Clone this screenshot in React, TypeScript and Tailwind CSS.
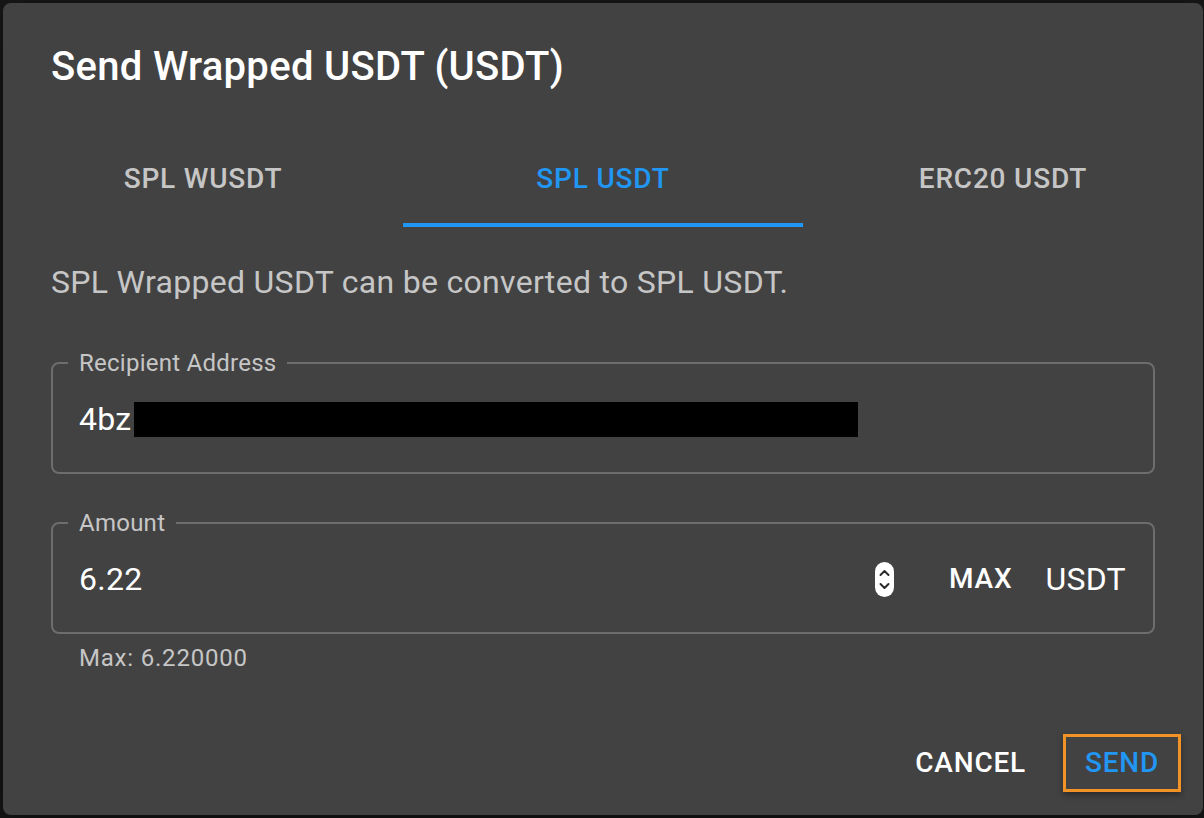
import { useState } from "react";

const tabs = ["SPL WUSDT", "SPL USDT", "ERC20 USDT"];

const Spinner = () => (
   <svg width="19" height="35" viewBox="0 0 19 35" className="shrink-0">
      <rect x="0" y="0" width="19" height="35" rx="9.5" fill="#ffffff" />
      <path d="M5.5 13 L9.5 9 L13.5 13" fill="none" stroke="#2a2a2a" strokeWidth="2" strokeLinecap="round" strokeLinejoin="round" />
      <path d="M5.5 22 L9.5 26 L13.5 22" fill="none" stroke="#2a2a2a" strokeWidth="2" strokeLinecap="round" strokeLinejoin="round" />
   </svg>
);

const Field = ({ label, children, className = "" }: { label: string; children: React.ReactNode; className?: string }) => (
   <fieldset className={`border-2 border-[#6d6d6d] rounded-[8px] px-[15px] ${className}`}>
      <legend className="px-[11px] text-[24px] leading-[24px] tracking-[0.25px] text-[#c6c6c6]">{label}</legend>
      {children}
   </fieldset>
);

export default function App() {
   const [active, setActive] = useState(1);

   return (
      <div
         className="w-[1204px] h-[818px] bg-[#171717] pt-[3px] pl-[3px] overflow-hidden"
         style={{ fontFamily: "Roboto, 'Liberation Sans', sans-serif" }}
      >
         <div className="w-[1200px] h-[812px] bg-[#424242] rounded-[8px] flex flex-col shadow-[0_22px_70px_rgba(0,0,0,0.5)]">
            {/* Title */}
            <h2 className="px-[48px] pt-[32px] pb-[32px] text-[40px] leading-[64px] font-medium tracking-[0.3px] text-white">
               Send Wrapped USDT (USDT)
            </h2>

            {/* Tabs */}
            <div className="grid grid-cols-3 h-[96px]">
               {tabs.map((tab, idx) => (
                  <button
                     key={tab}
                     onClick={() => setActive(idx)}
                     className={`relative flex items-center justify-center text-[28px] font-medium tracking-[0.8px] uppercase ${
                        active === idx ? "text-[#2196f3]" : "text-[#c6c6c6]"
                     }`}
                  >
                     {tab}
                     {active === idx && (
                        <span className="absolute left-0 right-0 bottom-0 h-[4px] bg-[#2196f3]" />
                     )}
                  </button>
               ))}
            </div>

            {/* Content */}
            <div className="px-[48px] pt-[31px]">
               <p className="text-[32px] leading-[48px] tracking-[0.3px] text-[#c6c6c6]">
                  SPL Wrapped USDT can be converted to SPL USDT.
               </p>

               <Field label="Recipient Address" className="mt-[45px]">
                  <div className="pl-[11px] pt-[20px] pb-[29px] text-[32px] leading-[48px] tracking-[0.3px] text-white whitespace-nowrap">
                     4bz
                     <span className="inline-block w-[724px] h-[35px] bg-black ml-[2px] align-[-7px]" />
                  </div>
               </Field>

               <Field label="Amount" className="mt-[37px]">
                  <div className="flex items-center pl-[11px] pr-[12px] pt-[20px] pb-[29px]">
                     <span className="flex-1 text-[32px] leading-[48px] tracking-[0.3px] text-white">6.22</span>
                     <Spinner />
                     <span className="ml-[55px] text-[28px] font-medium tracking-[0.8px] text-white">MAX</span>
                     <span className="ml-[33px] text-[32px] leading-[48px] tracking-[0.3px] text-white">USDT</span>
                  </div>
               </Field>

               <p className="pl-[28px] mt-[8px] text-[24px] leading-[32px] tracking-[0.8px] text-[#c6c6c6]">Max: 6.220000</p>
            </div>

            {/* Actions */}
            <div className="mt-auto flex items-center justify-end gap-[37px] pr-[22px] pb-[23px]">
               <button className="text-[28px] font-medium tracking-[0.8px] text-white">CANCEL</button>
               <button className="w-[118px] h-[58px] border-[3px] border-[#f39325] shadow-[0_3px_6px_rgba(0,0,0,0.35)] text-[28px] font-medium tracking-[0.8px] text-[#2196f3]">
                  SEND
               </button>
            </div>
         </div>
      </div>
   );
}
